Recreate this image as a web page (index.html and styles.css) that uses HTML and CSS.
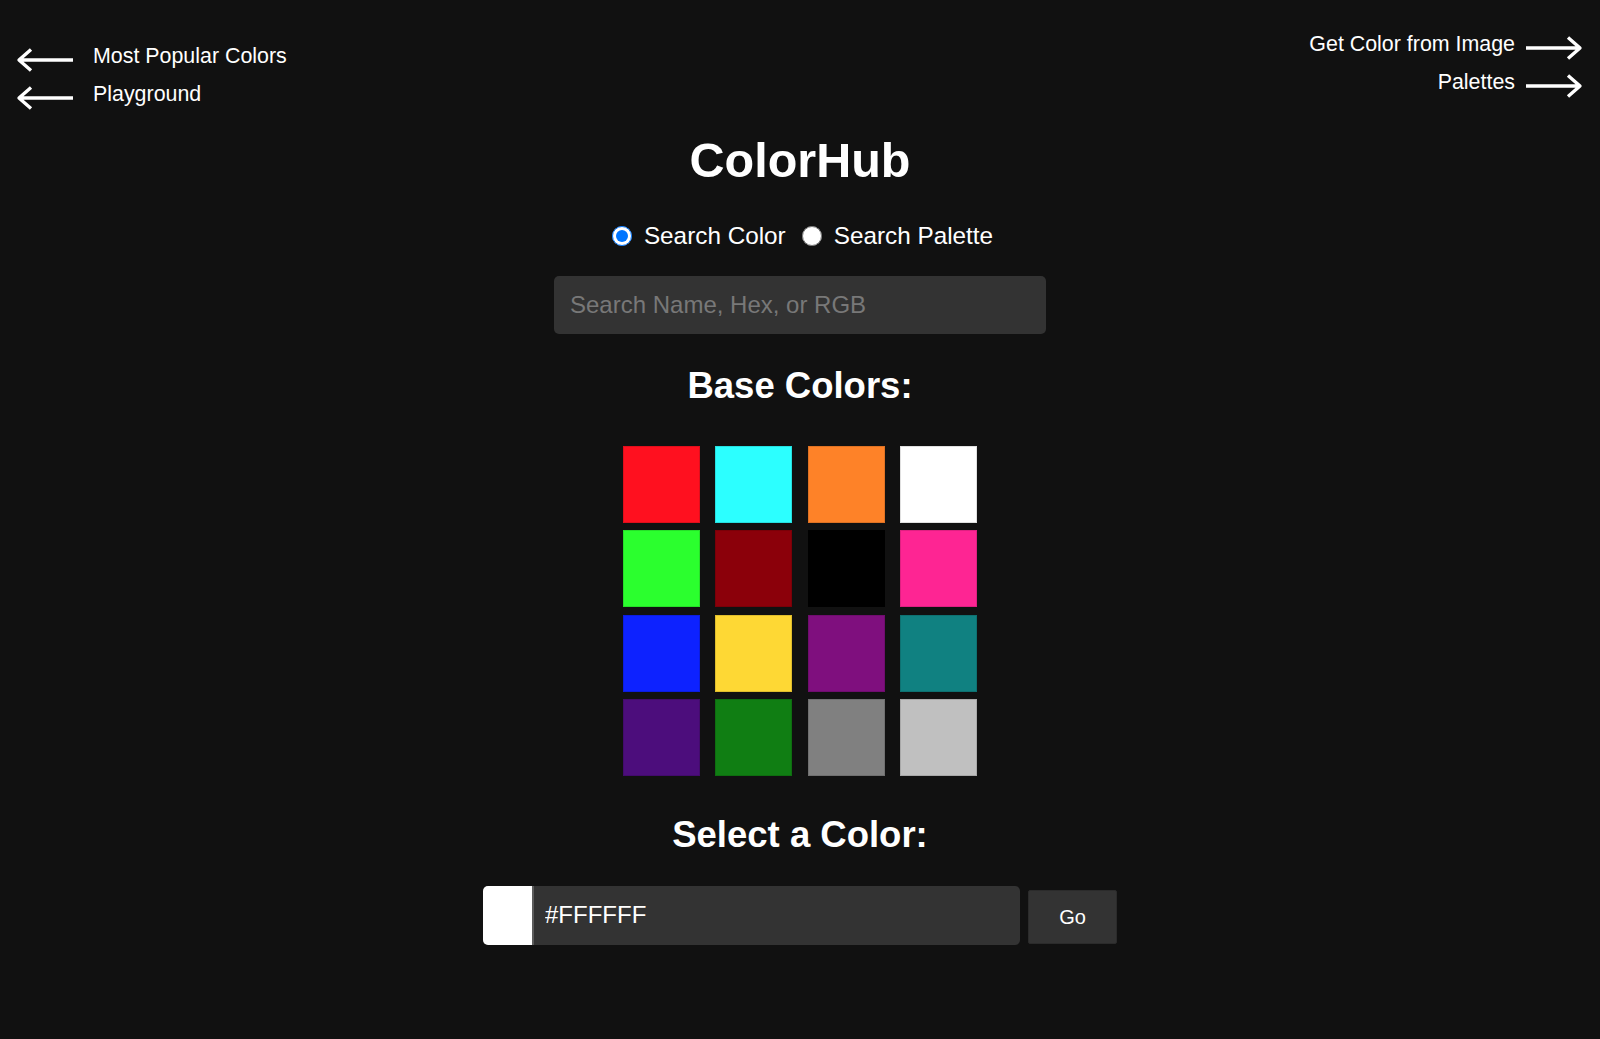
FILE: index.html
```html
<!DOCTYPE html>
<html lang="en">
<head>
    <meta charset="UTF-8">
    <title>ColorHub</title>
    <link rel="stylesheet" href="styles.css">
</head>
<body>
<header class="top">
    <nav class="nav nav-left">
        <a class="nav-link" href="#">
            <svg class="arrow" viewBox="0 0 58 24"><path d="M57 12H4M15 1.5L3 12L15 22.5"/></svg>
            <span>Most Popular Colors</span>
        </a>
        <a class="nav-link" href="#">
            <svg class="arrow" viewBox="0 0 58 24"><path d="M57 12H4M15 1.5L3 12L15 22.5"/></svg>
            <span>Playground</span>
        </a>
    </nav>
    <nav class="nav nav-right">
        <a class="nav-link" href="#">
            <span>Get Color from Image</span>
            <svg class="arrow" viewBox="0 0 58 24"><path d="M1 12H54M43 1.5L55 12L43 22.5"/></svg>
        </a>
        <a class="nav-link" href="#">
            <span>Palettes</span>
            <svg class="arrow" viewBox="0 0 58 24"><path d="M1 12H54M43 1.5L55 12L43 22.5"/></svg>
        </a>
    </nav>
</header>

<main class="main">
    <h1 class="title">ColorHub</h1>

    <div class="modes">
        <label class="mode"><input type="radio" name="mode" checked> Search Color</label>
        <label class="mode"><input type="radio" name="mode"> Search Palette</label>
    </div>

    <input class="search" type="text" placeholder="Search Name, Hex, or RGB">

    <h2 class="heading">Base Colors:</h2>

    <div class="swatches">
        <div class="swatch" style="background:#ff101f"></div>
        <div class="swatch" style="background:#2cffff"></div>
        <div class="swatch" style="background:#fe8228"></div>
        <div class="swatch" style="background:#ffffff"></div>
        <div class="swatch" style="background:#2bff2e"></div>
        <div class="swatch" style="background:#8b000a"></div>
        <div class="swatch" style="background:#000000"></div>
        <div class="swatch" style="background:#fe2593"></div>
        <div class="swatch" style="background:#0d22ff"></div>
        <div class="swatch" style="background:#fed834"></div>
        <div class="swatch" style="background:#7f0f7e"></div>
        <div class="swatch" style="background:#108181"></div>
        <div class="swatch" style="background:#4c0d7c"></div>
        <div class="swatch" style="background:#107e13"></div>
        <div class="swatch" style="background:#808080"></div>
        <div class="swatch" style="background:#c0c0c0"></div>
    </div>

    <h2 class="heading heading-select">Select a Color:</h2>

    <div class="picker">
        <div class="picker-field">
            <span class="picker-swatch"></span>
            <input class="picker-input" type="text" value="#FFFFFF">
        </div>
        <button class="go">Go</button>
    </div>
</main>
</body>
</html>
```

FILE: styles.css
```css
*{padding: 0;margin: 0;box-sizing: border-box;}
body{
    background: #111;
    color: #fff;
    font-family: "Liberation Sans", Arial, Helvetica, sans-serif;
    min-height: 1039px;
}
.top{
    display: flex;
    justify-content: space-between;
    align-items: flex-start;
}
.nav{
    display: flex;
    flex-direction: column;
}
.nav-left{
    padding: 37px 0 0 16px;
    align-items: flex-start;
}
.nav-right{
    padding: 25px 17px 0 0;
    align-items: flex-end;
}
.nav-link{
    display: flex;
    align-items: center;
    height: 38px;
    font-size: 21.4px;
    color: #fff;
    text-decoration: none;
}
.nav-left .nav-link{gap: 19px;}
.nav-right .nav-link{gap: 10px;}
.arrow{
    width: 58px;
    height: 24px;
    margin-top: 7px;
    fill: none;
    stroke: #fff;
    stroke-width: 3.4;
    stroke-linejoin: round;
}
.main{
    display: flex;
    flex-direction: column;
    align-items: center;
}
.title{
    margin-top: 19px;
    font-size: 48.5px;
    line-height: 56px;
    font-weight: bold;
}
.modes{
    display: flex;
    gap: 16px;
    margin-top: 33px;
    padding-left: 5px;
    height: 30px;
    font-size: 24.3px;
    line-height: 30px;
}
.mode{
    display: flex;
    align-items: center;
}
.mode input{
    width: 20px;
    height: 20px;
    margin: 0 12px 0 0;
}
.search{
    margin-top: 25px;
    width: 492px;
    height: 58px;
    padding: 0 16px;
    border: 0;
    border-radius: 5px;
    background: #333;
    color: #fff;
    font-family: inherit;
    font-size: 24px;
    outline: none;
}
.search::placeholder{color: #787878;}
.heading{
    margin-top: 31px;
    font-size: 36.5px;
    line-height: 42px;
    font-weight: bold;
}
.swatches{
    display: grid;
    grid-template-columns: repeat(4, 77px);
    grid-auto-rows: 77px;
    column-gap: 15.3px;
    row-gap: 7.3px;
    margin-top: 39px;
}
.swatch{
    box-shadow: inset 0 0 0 1px rgba(0,0,0,.12);
}
.heading-select{margin-top: 38px;}
.picker{
    display: flex;
    align-items: center;
    gap: 8px;
    margin-top: 30px;
}
.picker-field{
    display: flex;
    width: 537px;
    height: 59px;
    border-radius: 5px;
    background: #333;
    overflow: hidden;
}
.picker-swatch{
    width: 51px;
    background: #fff;
    border-right: 2px solid #5c5c5c;
}
.picker-input{
    flex: 1;
    min-width: 0;
    padding: 0 11px;
    border: 0;
    background: transparent;
    color: #fff;
    font-family: inherit;
    font-size: 24px;
    outline: none;
}
.go{
    width: 89px;
    height: 54px;
    margin-top: 4px;
    border: 1px solid #2b2b2b;
    border-radius: 2px;
    background: #333;
    color: #fff;
    font-family: inherit;
    font-size: 20px;
    cursor: pointer;
}
```
